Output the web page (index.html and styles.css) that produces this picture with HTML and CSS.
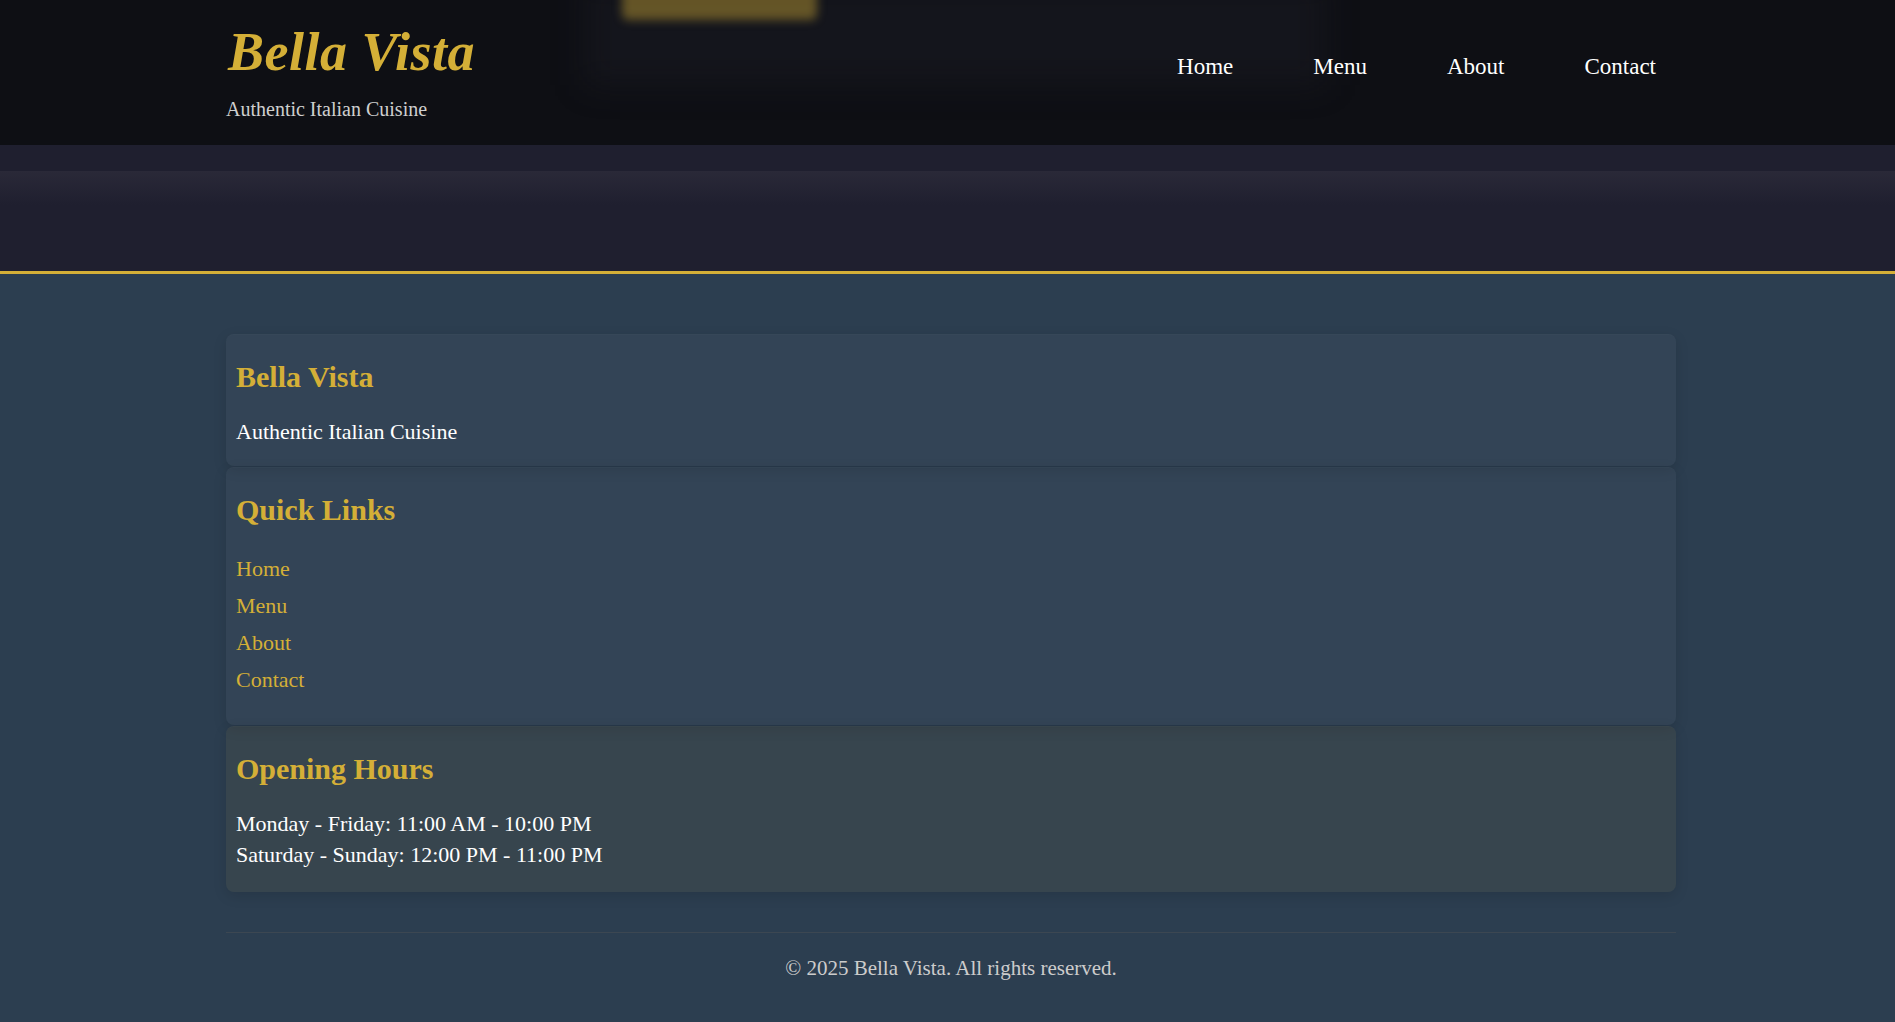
FILE: index.html
```html
<!DOCTYPE html>
<html lang="en">
<head>
<meta charset="utf-8">
<title>Bella Vista</title>
<link rel="stylesheet" href="styles.css">
</head>
<body>
<header class="site-header">
  <div class="header-glow"></div>
  <div class="header-btn-blur"></div>
  <div class="header-inner">
    <div class="brand">
      <div class="logo">Bella Vista</div>
      <div class="tagline">Authentic Italian Cuisine</div>
    </div>
    <nav class="nav">
      <a href="#">Home</a>
      <a href="#">Menu</a>
      <a href="#">About</a>
      <a href="#">Contact</a>
    </nav>
  </div>
</header>
<section class="hero-tail">
  <div class="hero-strip"></div>
  <div class="hero-fade"></div>
</section>
<main class="main">
  <div class="container">
    <div class="cards">
      <section class="card card-intro">
        <h3>Bella Vista</h3>
        <p>Authentic Italian Cuisine</p>
      </section>
      <section class="card card-links">
        <h3>Quick Links</h3>
        <ul class="links">
          <li><a href="#">Home</a></li>
          <li><a href="#">Menu</a></li>
          <li><a href="#">About</a></li>
          <li><a href="#">Contact</a></li>
        </ul>
      </section>
      <section class="card card-hours">
        <h3>Opening Hours</h3>
        <p>Monday - Friday: 11:00 AM - 10:00 PM</p>
        <p>Saturday - Sunday: 12:00 PM - 11:00 PM</p>
      </section>
    </div>
    <footer class="footer">
      <p>&copy; 2025 Bella Vista. All rights reserved.</p>
    </footer>
  </div>
</main>
</body>
</html>
```
FILE: styles.css
```css
* { box-sizing: border-box; }
html, body {
  margin: 0;
  padding: 0;
  background: #2c3e50;
  font-family: "Liberation Serif", "DejaVu Serif", serif;
  color: #fff;
}
a { text-decoration: none; }

.site-header {
  position: relative;
  height: 145px;
  background: #0e0f14;
  overflow: hidden;
}
.header-glow {
  position: absolute;
  left: 585px;
  top: -20px;
  width: 740px;
  height: 105px;
  background: rgba(40, 40, 50, 0.25);
  filter: blur(16px);
}
.header-btn-blur {
  position: absolute;
  left: 622px;
  top: -22px;
  width: 195px;
  height: 42px;
  border-radius: 6px;
  background: rgba(212, 175, 55, 0.42);
  filter: blur(5px);
}
.header-inner {
  position: relative;
  width: 1450px;
  margin-left: 226px;
  padding-top: 25px;
  display: flex;
  justify-content: space-between;
  align-items: flex-start;
}
.brand { display: flex; flex-direction: column; }
.logo {
  font-size: 54px;
  line-height: 54px;
  font-weight: 700;
  font-style: italic;
  color: #d4af37;
  padding-left: 2px;
  letter-spacing: 0.5px;
}
.tagline {
  margin-top: 19px;
  font-size: 20px;
  line-height: 23px;
  color: #cfcfcf;
}
.nav {
  display: flex;
  gap: 40px;
  margin-top: 29px;
}
.nav a {
  color: #fff;
  font-size: 23px;
  line-height: 26px;
  padding: 0 20px;
}

.hero-tail {
  height: 129px;
  background: #1f1f2f;
  border-bottom: 3px solid #d4af37;
}
.hero-strip { height: 26px; background: #1f1f2f; }
.hero-fade {
  height: 34px;
  background: linear-gradient(#2a2938, #1f1f2f);
}

.main { padding-top: 60px; }
.container {
  width: 1450px;
  margin-left: 226px;
}
.cards {
  display: flex;
  flex-direction: column;
  gap: 1px;
}
.card {
  background: rgba(255, 255, 255, 0.035);
  border-radius: 8px;
  padding: 25px 10px 20px;
  box-shadow: 0 4px 14px rgba(0, 0, 0, 0.12);
  border-top: 1px solid rgba(255, 255, 255, 0.02);
}
.card-intro { padding-bottom: 19px; }
.card-links { padding-bottom: 27px; }
.card-hours { background: rgba(212, 175, 55, 0.07); padding-bottom: 22px; }
.card h3 {
  margin: 0 0 23px;
  font-size: 30px;
  line-height: 33px;
  font-weight: 700;
  color: #d4af37;
}
.card p {
  margin: 0;
  font-size: 22px;
  line-height: 31px;
  color: #fff;
}
.links {
  list-style: none;
  margin: 0;
  padding: 1px 0 0;
}
.links li { font-size: 22px; line-height: 37px; }
.links a {
  color: #d4af37;
  font-size: 22px;
}
.footer {
  margin-top: 40px;
  border-top: 1px solid #3c4752;
  padding: 20px 0 20px;
  text-align: center;
}
.footer p {
  margin: 0;
  font-size: 21px;
  line-height: 30px;
  color: #cccccc;
}
```
